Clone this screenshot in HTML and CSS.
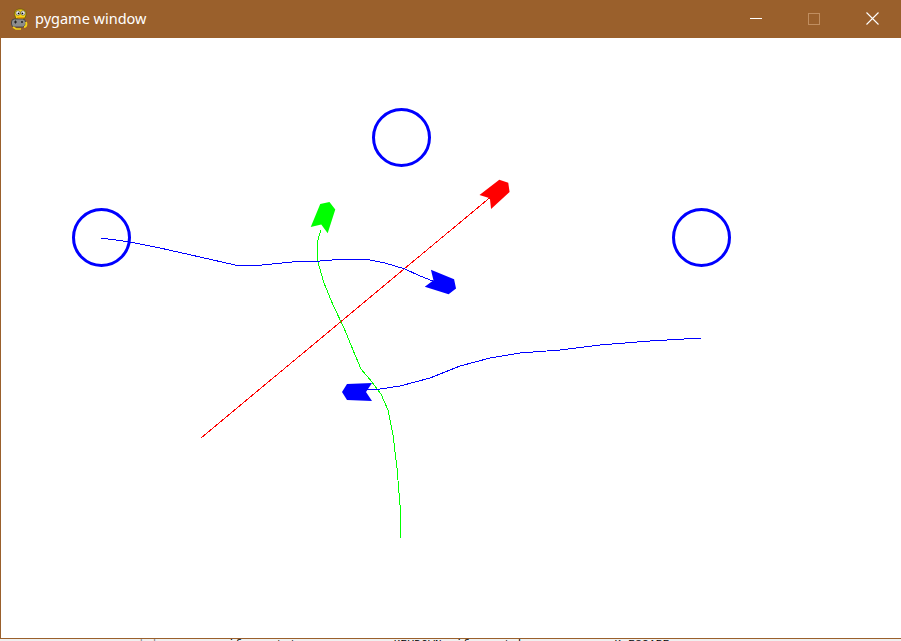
FILE: index.html
```html
<!DOCTYPE html>
<html>
<head>
<meta charset="utf-8">
<title>pygame window</title>
<link rel="stylesheet" href="styles.css">
</head>
<body>
<div class="window">
  <div class="titlebar">
    <div class="title-left">
      <svg class="app-icon" width="20" height="22" viewBox="0 0 20 22">
        <path d="M5 8 C3 4 6 1 10 1 C14 1 17 3 16 7 L15 10 L6 11 Z" fill="#f2d21a" stroke="#6b5a00" stroke-width="0.8"/>
        <circle cx="8" cy="5" r="2.2" fill="#fff" stroke="#333" stroke-width="0.6"/>
        <circle cx="13" cy="5" r="2.2" fill="#fff" stroke="#333" stroke-width="0.6"/>
        <circle cx="8.5" cy="5.3" r="0.9" fill="#000"/>
        <circle cx="12.5" cy="5.3" r="0.9" fill="#000"/>
        <path d="M7 9 L14 9 L13 11 L8 11 Z" fill="#e8a000"/>
        <rect x="1.5" y="11" width="14" height="8" rx="3" fill="#8c8c8c" stroke="#3a3a3a" stroke-width="0.8"/>
        <rect x="4" y="13.5" width="3" height="1" fill="#222"/>
        <rect x="5" y="12.5" width="1" height="3" fill="#222"/>
        <circle cx="12" cy="14" r="1" fill="#222"/>
        <path d="M14 19 C16 19 17 17 16 14" fill="none" stroke="#f2d21a" stroke-width="2"/>
        <path d="M3 19 L6 21 L11 21" fill="none" stroke="#f2d21a" stroke-width="1.6"/>
      </svg>
      <span class="title-text">pygame window</span>
    </div>
    <div class="controls">
      <div class="ctl ctl-min"><span class="min-line"></span></div>
      <div class="ctl ctl-max"><span class="max-box"></span></div>
      <div class="ctl ctl-close">
        <svg width="13" height="13" viewBox="0 0 13 13"><path d="M0.5 0.5 L12.5 12.5 M12.5 0.5 L0.5 12.5" stroke="#fff" stroke-width="1.1" fill="none"/></svg>
      </div>
    </div>
  </div>
  <div class="canvas">
    <svg class="scene" width="900" height="600" viewBox="1 38 900 600">
      <g fill="none" stroke="#0000ff" stroke-width="3">
        <circle cx="101.5" cy="237.5" r="28"/>
        <circle cx="401.5" cy="137.5" r="28"/>
        <circle cx="701.5" cy="237.5" r="28"/>
      </g>
      <g fill="none" stroke-width="1" shape-rendering="crispEdges">
        <polyline stroke="#ff0000" points="201,438 493,195"/>
        <polyline stroke="#00ff00" points="401,538 400,505 397,468 393,435 388,410 381,394 372,382 361,369 353,350 344,328 333,305 324,283 318,262 317,243 321,230"/>
        <polyline stroke="#0000ff" points="101,238 130,242 160,248 200,257 235,265 262,265 292,262 320,261 345,259 365,259 385,263 405,269 420,276 433,281"/>
        <polyline stroke="#0000ff" points="701,338 650,341 600,345 560,350 520,353 490,358 460,366 430,378 400,386 380,389 367,390"/>
      </g>
      <g>
        <polygon fill="#0000ff" transform="translate(441,283) rotate(20)" points="16,0 11,-8 -14,-9 -8,0 -14,9 11,8"/>
        <polygon fill="#ff0000" transform="translate(496,193) rotate(-40)" points="16,0 11,-8 -14,-9 -8,0 -14,9 11,8"/>
        <polygon fill="#00ff00" transform="translate(324,217) rotate(-70)" points="16,0 11,-8 -14,-9 -8,0 -14,9 11,8"/>
        <polygon fill="#0000ff" transform="translate(358,392) rotate(180)" points="16,0 11,-8 -14,-9 -8,0 -14,9 11,8"/>
      </g>
    </svg>
  </div>
</div>
<div class="below">
  <div class="below-inner">
    <span class="bars">| |</span>
    <span class="code">if event.type == pygame.KEYDOWN: if event.key == pygame.K_ESCAPE:</span>
  </div>
</div>
</body>
</html>
```

FILE: styles.css
```css
html, body {
  margin: 0;
  padding: 0;
  background: #f0f0f0;
  overflow: hidden;
}

.window {
  width: 901px;
  box-sizing: border-box;
  border-left: 1px solid #9a602c;
  border-bottom: 1px solid #9a602c;
  background: #9a602c;
  overflow: hidden;
}

.titlebar {
  height: 38px;
  display: flex;
  justify-content: space-between;
  align-items: stretch;
  background: #9a602c;
}

.title-left {
  display: flex;
  align-items: center;
  padding-left: 9px;
  gap: 5px;
}

.app-icon {
  display: block;
  margin-top: -1px;
}

.title-text {
  color: #ffffff;
  font-family: "Noto Sans", "DejaVu Sans", sans-serif;
  font-size: 14.5px;
  margin-top: -2px;
}

.controls {
  display: flex;
  margin-right: 0;
}

.ctl {
  width: 58px;
  display: flex;
  align-items: center;
  justify-content: center;
}

.ctl-min {
  margin-top: -1px;
}

.min-line {
  display: block;
  width: 12px;
  height: 1px;
  background: #ffffff;
}

.max-box {
  display: block;
  width: 10px;
  height: 10px;
  border: 1px solid #c08e60;
  margin-top: -1px;
}

.ctl-close svg {
  display: block;
  margin-top: -1px;
}

.canvas {
  width: 900px;
  height: 600px;
  background: #ffffff;
}

.scene {
  display: block;
}

.below {
  height: 2px;
  overflow: hidden;
  background: #f0f0f0;
}

.below-inner {
  margin-top: -1px;
  display: flex;
  align-items: flex-start;
  font-family: "Liberation Mono", monospace;
  font-size: 11px;
  line-height: 12px;
  color: #000;
}

.bars {
  padding-left: 138px;
  width: 90px;
  color: #777;
}

.code {
  letter-spacing: 0.3px;
}
```
